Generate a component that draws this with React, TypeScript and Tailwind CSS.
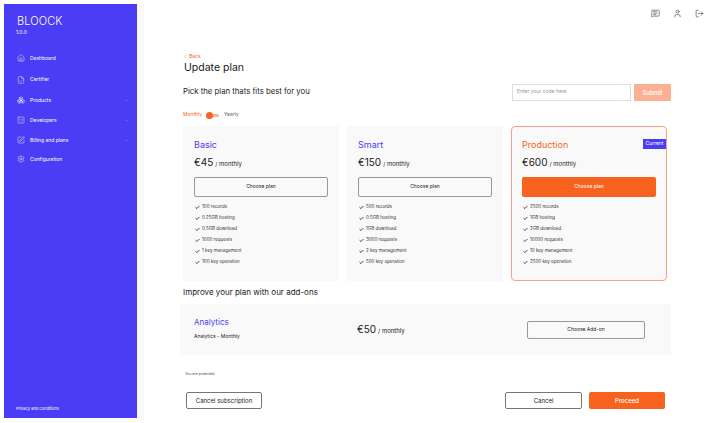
import React from "react";
import {
  Boxes,
  Check,
  ChevronDown,
  ChevronLeft,
  FileCheck,
  Home,
  LogOut,
  MessageSquareText,
  Settings,
  SquareCode,
  SquarePen,
  User,
} from "lucide-react";

const nav = [
  { label: "Dashboard", icon: Home, h: "h-[22px]" },
  { label: "Certifier", icon: FileCheck, h: "h-[21px]" },
  { label: "Products", icon: Boxes, arrow: true, h: "h-[20px]" },
  { label: "Developers", icon: SquareCode, arrow: true, h: "h-[20px]" },
  { label: "Billing and plans", icon: SquarePen, arrow: true, h: "h-[20px]" },
  { label: "Configuration", icon: Settings, h: "h-[18px]" },
];

const plans = [
  {
    name: "Basic",
    price: "€45",
    items: ["100 records", "0.25GB hosting", "0.5GB download", "1000 requests", "1 key management", "100 key operation"],
  },
  {
    name: "Smart",
    price: "€150",
    items: ["500 records", "0.5GB hosting", "1GB download", "3000 requests", "2 key management", "500 key operation"],
  },
  {
    name: "Production",
    price: "€600",
    current: true,
    items: ["2500 records", "1GB hosting", "2GB download", "10000 requests", "10 key management", "2500 key operation"],
  },
];

const App = () => {
  return (
    <div className="flex h-[423px] w-[717px] overflow-hidden bg-white pl-1 font-['Inter',sans-serif] text-[#1a1a1a]">
      <aside className="my-1 flex h-[414px] w-[133px] flex-col justify-between bg-[#4a3df5] pb-[7px] pl-3 pr-2 pt-[10px] text-white">
        <div>
          <div className="ml-[1px] text-[11px] font-light leading-[14px] tracking-[0.01em]">BLOOCK</div>
          <div className="text-[5px] leading-[8px]">1.0.0</div>
          <nav className="mt-[11px] flex flex-col">
            {nav.map((item) => (
              <div key={item.label} className={`flex items-center ${item.h}`}>
                <item.icon size={8} strokeWidth={1.3} className="ml-[1px] mr-[5px]" />
                <span className="text-[5px] leading-none">{item.label}</span>
                {item.arrow && <ChevronDown size={5} className="ml-auto opacity-50" />}
              </div>
            ))}
          </nav>
        </div>
        <div className="text-[4px] leading-none">Privacy and conditions</div>
      </aside>
      <div className="h-[414px] w-[7px] translate-y-1 bg-[#f9f9f9]" />
      <main className="flex-1 pl-[39px] pr-[50px]">
        <div className="-mr-[40px] flex h-[53px] items-start justify-end gap-[13px] pr-[3px] pt-[9px] text-[#222]">
          <MessageSquareText size={9} strokeWidth={1.4} />
          <User size={9} strokeWidth={1.4} />
          <LogOut size={9} strokeWidth={1.4} />
        </div>
        <div className="flex items-center text-[5px] leading-[6px] text-[#f76420]">
          <ChevronLeft size={5} />
          <span className="ml-[1px]">Back</span>
        </div>
        <h1 className="ml-[1px] mt-[1px] text-[10.5px] leading-[16px]">Update plan</h1>
        <div className="-mr-[4px] mt-[7px] flex h-[18px] items-center justify-between">
          <p className="text-[7.75px]">Pick the plan thats fits best for you</p>
          <div className="flex gap-[3px]">
            <div className="flex h-[17px] w-[119px] items-center border border-[#ddd] pl-1 text-[5px] text-[#999]">
              Enter your code here
            </div>
            <div className="flex h-[17px] w-[37px] items-center justify-center rounded-[1px] bg-[#fbb093] text-[6px] font-medium text-white">
              Submit
            </div>
          </div>
        </div>
        <div className="mt-[9px] flex h-[10px] items-center text-[5px]">
          <span className="text-[#f76420]">Monthly</span>
          <span className="relative ml-[5px] mr-[5px] block h-[3px] w-[12px] rounded-full bg-[#fbb093]">
            <span className="absolute -left-[1px] -top-[2px] h-[7px] w-[7px] rounded-full bg-[#f76420]" />
          </span>
          <span className="text-[#666]">Yearly</span>
        </div>
        <div className="mt-[6px] grid h-[155px] grid-cols-3 gap-[8px]">
          {plans.map((plan) => (
            <div
              key={plan.name}
              className={`relative bg-[#f9f9f9] ${
                plan.current ? "rounded-[4px] border border-[#f9a184] px-[10px] pt-[12px]" : "px-[11px] pt-[13px]"
              }`}
            >
              {plan.current && (
                <span className="absolute right-0 top-[12px] flex h-[10px] w-[23px] items-center justify-center bg-[#4a3df5] text-[5px] text-white">
                  Current
                </span>
              )}
              <div className={`text-[9px] leading-[12px] ${plan.current ? "text-[#f76420]" : "text-[#4a3df5]"}`}>{plan.name}</div>
              <div className="mt-[5px] flex items-baseline gap-[2px] leading-[12px]">
                <span className="text-[10px]">{plan.price}</span>
                <span className="text-[6px]">/ monthly</span>
              </div>
              <div
                className={`mt-[7px] flex h-[20px] items-center justify-center rounded-[2px] text-[5px] ${
                  plan.current ? "bg-[#f7631e] text-white" : "border border-[#999]"
                }`}
              >
                Choose plan
              </div>
              <ul className="mt-[6px] flex flex-col gap-[3px]">
                {plan.items.map((item) => (
                  <li key={item} className="flex h-[8px] items-center text-[4.5px] text-[#333]">
                    <Check size={5} strokeWidth={4} className="ml-[1px] mr-[2px] text-[#222]" />
                    {item}
                  </li>
                ))}
              </ul>
            </div>
          ))}
        </div>
        <h2 className="mt-[6px] text-[8px] leading-[10px]">Improve your plan with our add-ons</h2>
        <div className="-ml-[3px] -mr-[4px] mt-[7px] flex h-[51px] items-center bg-[#f9f9f9] pl-[14px] pr-[26px]">
          <div className="-mt-[4px] w-[163px]">
            <div className="text-[8px] leading-[10px] text-[#4a3df5]">Analytics</div>
            <div className="mt-[6px] text-[5px] leading-[6px]">Analytics - Monthly</div>
          </div>
          <div className="flex items-baseline gap-[2px]">
            <span className="text-[10px]">€50</span>
            <span className="text-[6px]">/ monthly</span>
          </div>
          <div className="ml-auto flex h-[18px] w-[118px] items-center justify-center rounded-[2px] border border-[#999] text-[5px]">
            Choose Add-on
          </div>
        </div>
        <p className="ml-[2px] mt-[17px] text-[3.5px] leading-[5px] text-[#444]">You are protected</p>
        <div className="mt-[15px] flex items-center pl-[3px] pr-[2px]">
          <div className="flex h-[17px] w-[76px] items-center justify-center rounded-[2px] border border-[#777] text-[6px]">
            Cancel subscription
          </div>
          <div className="ml-auto flex h-[17px] w-[77px] items-center justify-center rounded-[2px] border border-[#777] text-[6px]">
            Cancel
          </div>
          <div className="ml-[7px] flex h-[17px] w-[76px] items-center justify-center rounded-[2px] bg-[#f7631e] text-[6px] font-medium text-white">
            Proceed
          </div>
        </div>
      </main>
    </div>
  );
};

export default App;
